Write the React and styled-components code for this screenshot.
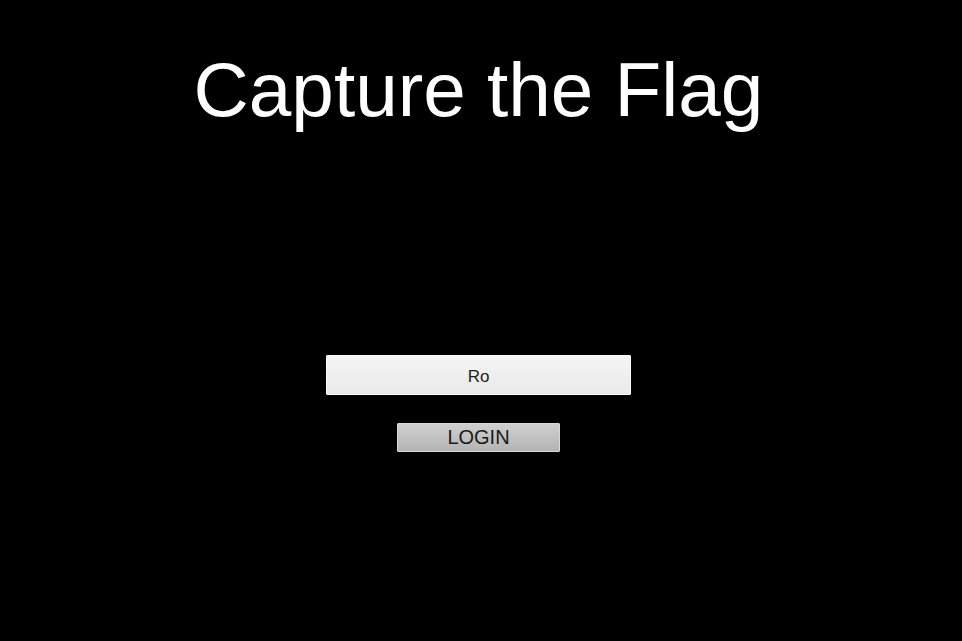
import React from "react";
import styled, { createGlobalStyle } from "styled-components";

const Global = createGlobalStyle`
  html, body { margin: 0; padding: 0; background: #000; }
  body { font-family: "Liberation Sans", Arial, sans-serif; }
`;

const Page = styled.div`
  width: 957px;
  height: 641px;
  background: #000;
  display: flex;
  flex-direction: column;
  align-items: center;
`;

const Title = styled.h1`
  margin: 45px 0 0;
  font-family: "Liberation Sans", Arial, sans-serif;
  font-weight: 400;
  font-size: 76.5px;
  line-height: 90px;
  color: #fff;
`;

const Field = styled.input`
  box-sizing: border-box;
  margin-top: 220px;
  width: 305px;
  height: 40px;
  border: 1px solid #fafafa;
  border-radius: 1px;
  background: linear-gradient(#f5f5f5, #e9e9e9);
  color: #222;
  font-family: "Liberation Sans", Arial, sans-serif;
  font-size: 17px;
  text-align: center;
  outline: none;
  padding: 3px 0 0;
`;

const Button = styled.button`
  box-sizing: border-box;
  margin-top: 28px;
  width: 163px;
  height: 29px;
  border: 1px solid #d8d8d8;
  border-radius: 1px;
  background: linear-gradient(#cfcfcf, #b4b4b4);
  color: #1a1a1a;
  font-family: "Liberation Sans", Arial, sans-serif;
  font-size: 20px;
  padding: 0;
  line-height: 27px;
  cursor: pointer;
`;

export default function App() {
  return (
    <>
      <Global />
      <Page>
        <Title>Capture the Flag</Title>
        <Field defaultValue="Ro" />
        <Button>LOGIN</Button>
      </Page>
    </>
  );
}
